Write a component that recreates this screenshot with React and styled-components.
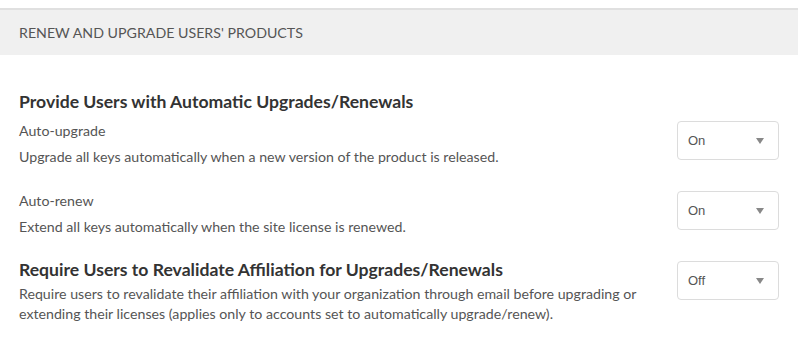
import React from 'react'
import styled, { createGlobalStyle } from 'styled-components'

const GlobalStyle = createGlobalStyle`
  body {
    margin: 0;
    background: #fff;
    font-family: "Lato", "Open Sans", sans-serif;
  }
`;

const Page = styled.div`
  padding-top: 8px;
`;

const SectionHeader = styled.div`
  height: 45px;
  border-top: 2px solid #e0e0e0;
  background: #f0f0f0;
  display: flex;
  align-items: center;
  padding: 0 19px;
  font-size: 14.2px;
  color: #555;
  text-transform: uppercase;
`;

const Content = styled.div`
  padding: 36px 19px 0;
  display: flex;
  flex-direction: column;
`;

const Heading = styled.h3`
  margin: 0;
  font-size: 17.6px;
  line-height: 22px;
  font-weight: 700;
  color: #333;
`;

const Row = styled.div`
  display: flex;
  justify-content: space-between;
  align-items: flex-start;
  margin-top: ${p => p.$top}px;
`;

const Text = styled.div`
  display: flex;
  flex-direction: column;
  gap: ${p => p.$gap || 0}px;
`;

const Label = styled.div`
  font-size: 14.2px;
  line-height: 20px;
  color: #555;
`;

const Desc = styled.div`
  font-size: 14.2px;
  line-height: 20px;
  color: #555;
  max-width: 650px;
`;

const Select = styled.div`
  flex: none;
  width: 102px;
  height: 39px;
  margin-top: ${p => p.$offset || 0}px;
  box-sizing: border-box;
  border: 1px solid #dcdcdc;
  border-radius: 4px;
  display: flex;
  align-items: center;
  justify-content: space-between;
  padding: 0 14px 0 10px;
  font-family: "Liberation Sans", Arial, sans-serif;
  font-size: 13px;
  color: #555;
`;

const Arrow = styled.span`
  width: 0;
  height: 0;
  border-left: 4px solid transparent;
  border-right: 4px solid transparent;
  border-top: 6px solid #888;
`;

const Dropdown = ({ value, offset }) => (
  <Select $offset={offset}>
    {value}
    <Arrow />
  </Select>
);

export default function App() {
  return (
    <Page>
      <GlobalStyle />
      <SectionHeader>Renew and Upgrade Users' Products</SectionHeader>
      <Content>
        <Heading>Provide Users with Automatic Upgrades/Renewals</Heading>
        <Row $top={8}>
          <Text $gap={6}>
            <Label>Auto-upgrade</Label>
            <Desc>Upgrade all keys automatically when a new version of the product is released.</Desc>
          </Text>
          <Dropdown value="On" />
        </Row>
        <Row $top={24}>
          <Text $gap={6}>
            <Label>Auto-renew</Label>
            <Desc>Extend all keys automatically when the site license is renewed.</Desc>
          </Text>
          <Dropdown value="On" />
        </Row>
        <Row $top={22}>
          <Text $gap={3}>
            <Heading>Require Users to Revalidate Affiliation for Upgrades/Renewals</Heading>
            <Desc>
              Require users to revalidate their affiliation with your organization through email before upgrading or
              extending their licenses (applies only to accounts set to automatically upgrade/renew).
            </Desc>
          </Text>
          <Dropdown value="Off" offset={2} />
        </Row>
      </Content>
    </Page>
  );
}
